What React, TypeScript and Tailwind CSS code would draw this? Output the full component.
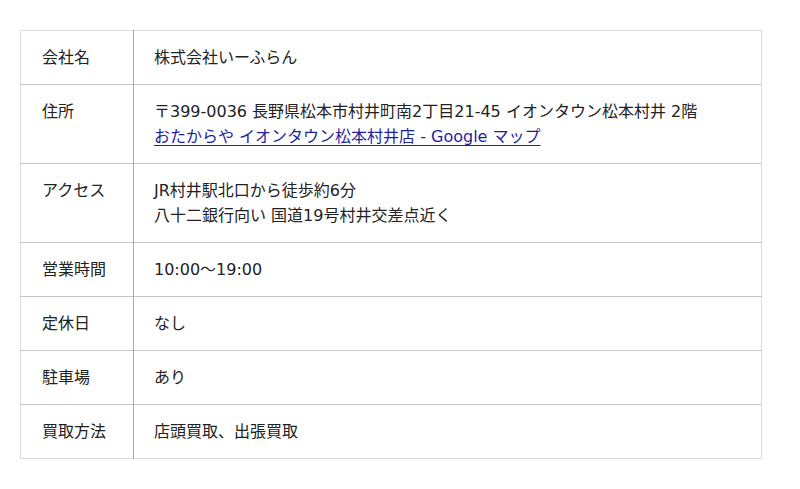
import React from "react";

const rows: { label: string; lines: React.ReactNode[] }[] = [
  { label: "会社名", lines: ["株式会社いーふらん"] },
  {
    label: "住所",
    lines: [
      "〒399-0036 長野県松本市村井町南2丁目21-45 イオンタウン松本村井 2階",
      <a key="l" href="#" className="text-[#1f1f9e] underline underline-offset-[3px]">
        おたからや イオンタウン松本村井店 - Google マップ
      </a>,
    ],
  },
  { label: "アクセス", lines: ["JR村井駅北口から徒歩約6分", "八十二銀行向い 国道19号村井交差点近く"] },
  { label: "営業時間", lines: ["10:00〜19:00"] },
  { label: "定休日", lines: ["なし"] },
  { label: "駐車場", lines: ["あり"] },
  { label: "買取方法", lines: ["店頭買取、出張買取"] },
];

export default function App() {
  return (
    <div
      className="w-[800px] h-[489px] bg-white pt-[30px] pl-[20px]"
      style={{ fontFamily: '"DejaVu Sans", "Noto Sans CJK JP", sans-serif' }}
    >
      <table className="w-[742px] border-collapse border border-[#dcdcdc] text-[16px] leading-[25px] text-[#222]">
        <tbody>
          {rows.map((r, i) => (
            <tr key={i} className={i > 0 ? "border-t border-[#c4c4c4]" : ""}>
              <th className="w-[113px] border-r border-[#a8a8a8] px-[21px] py-[14px] text-left align-top font-normal">
                {r.label}
              </th>
              <td className="px-[20px] py-[14px] align-top">
                {r.lines.map((l, j) => (
                  <div key={j}>{l}</div>
                ))}
              </td>
            </tr>
          ))}
        </tbody>
      </table>
    </div>
  );
}
